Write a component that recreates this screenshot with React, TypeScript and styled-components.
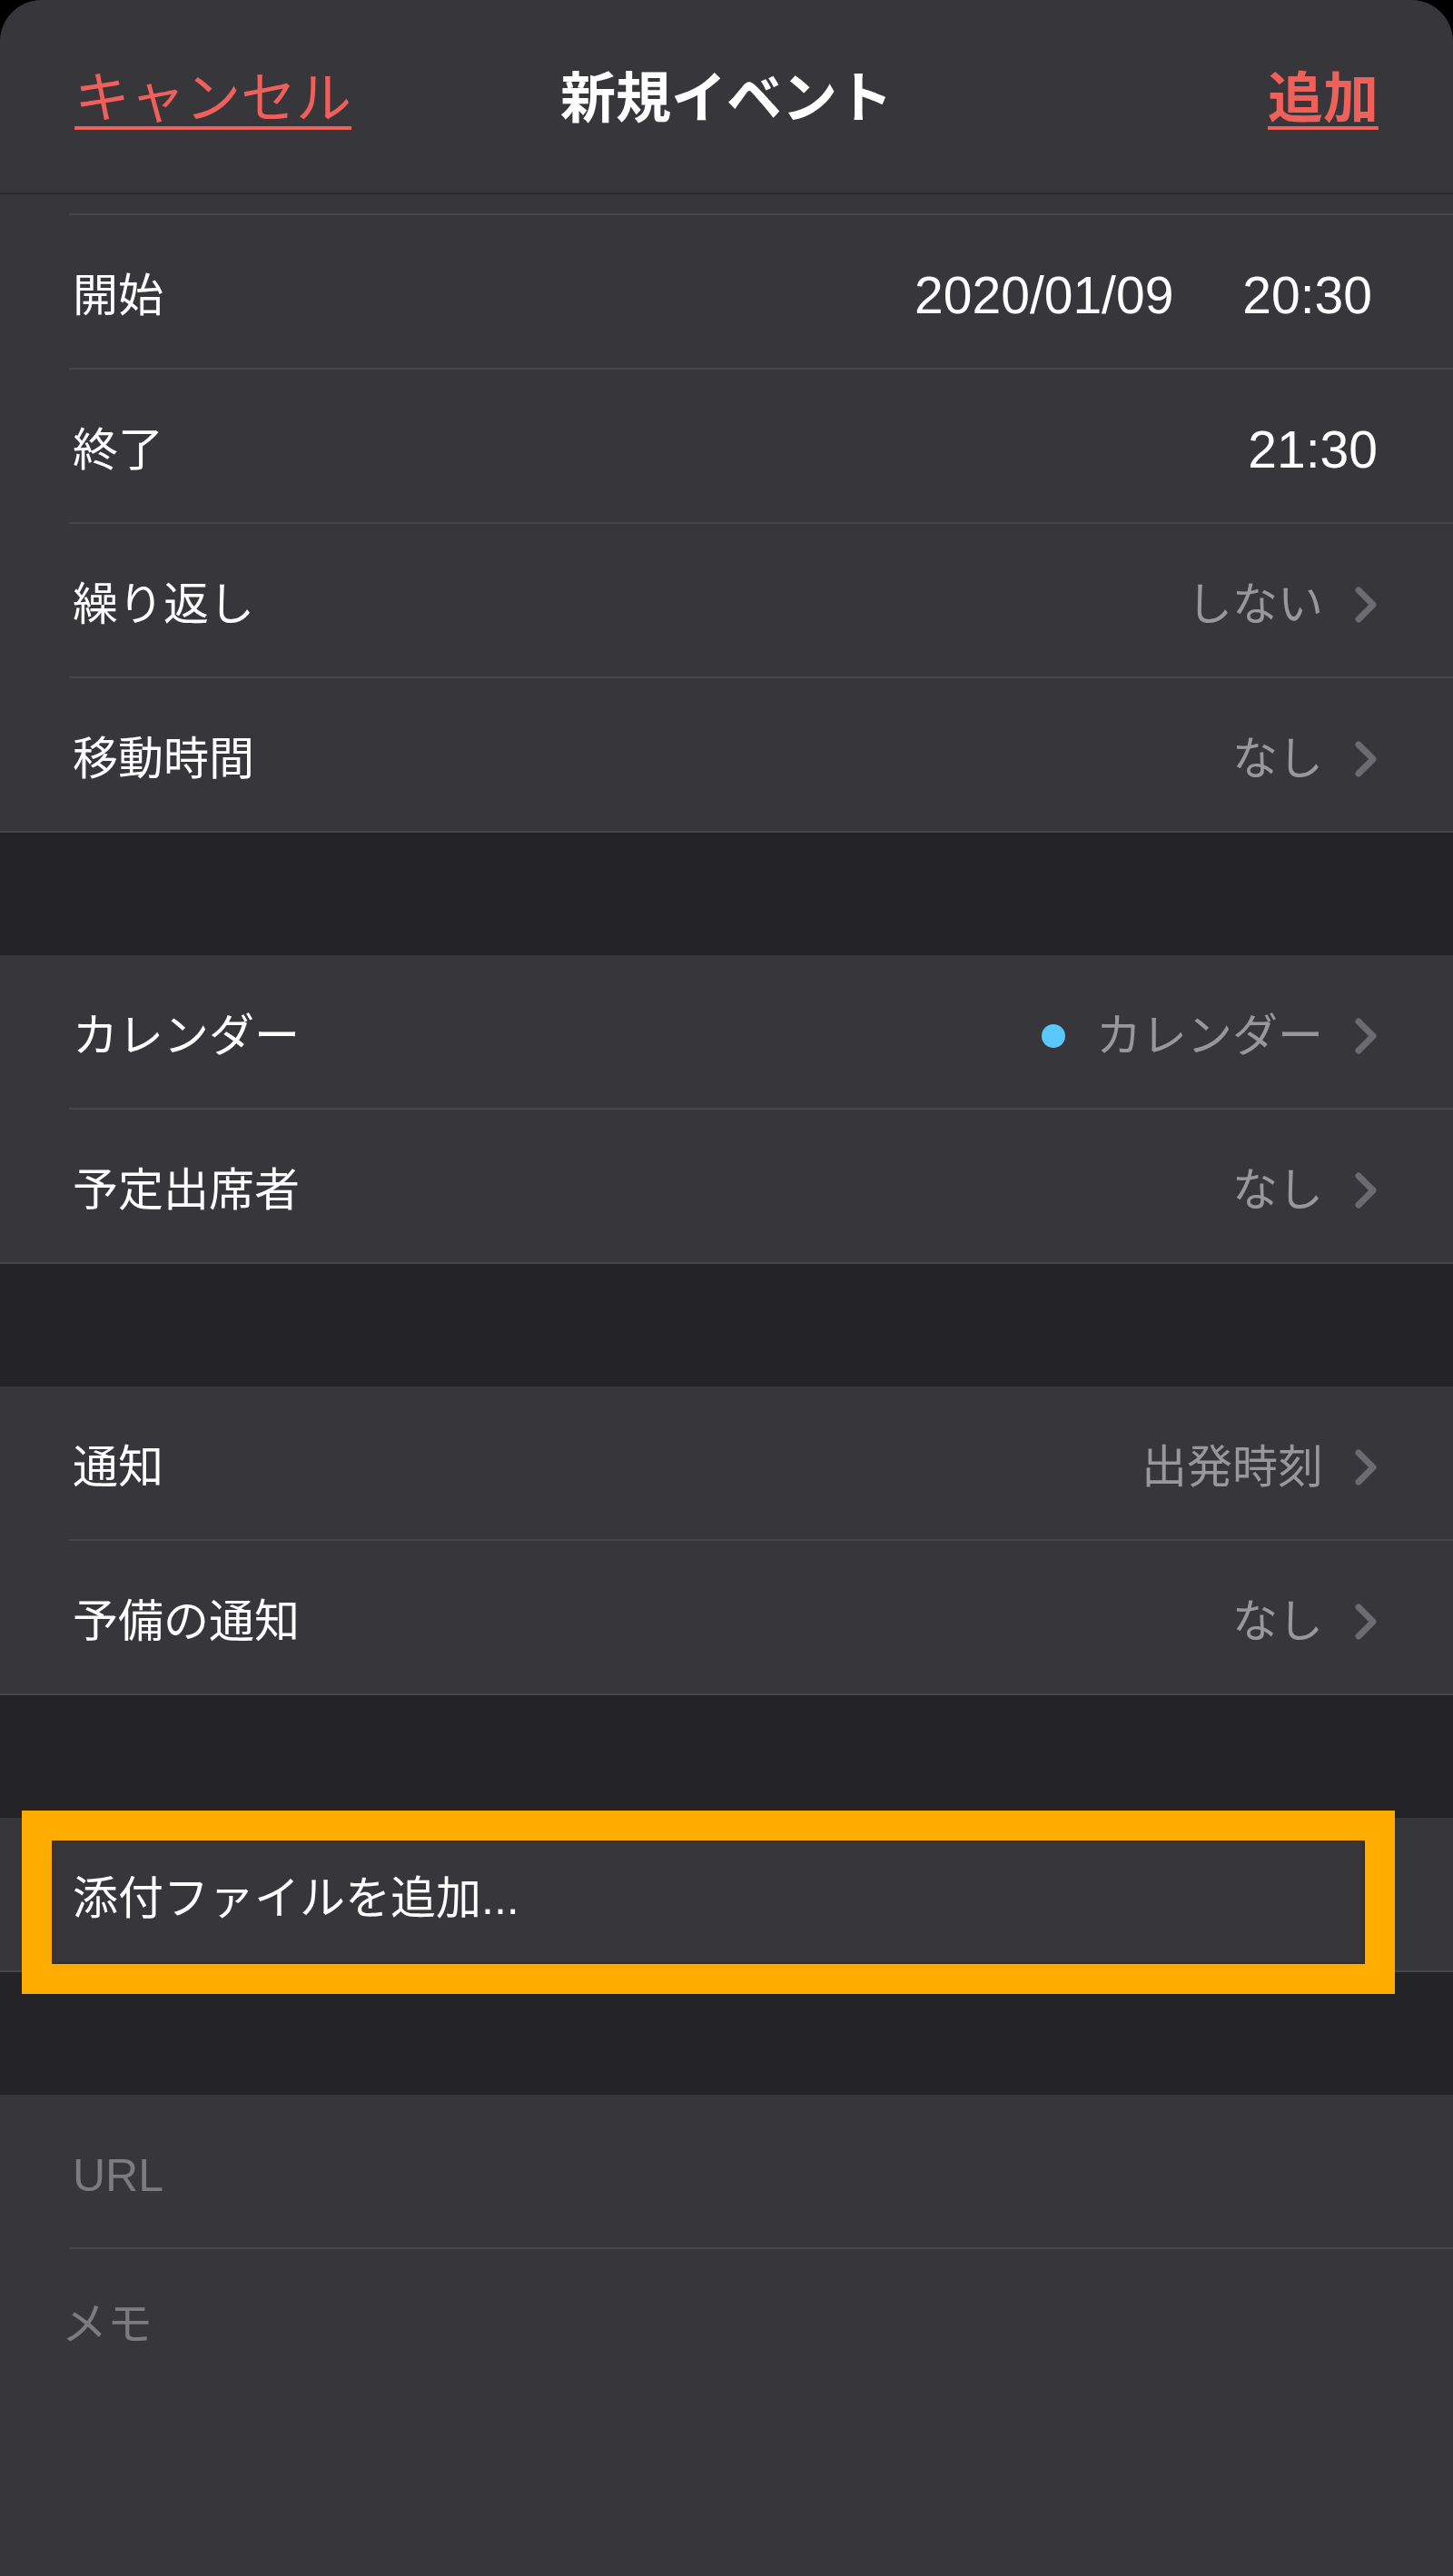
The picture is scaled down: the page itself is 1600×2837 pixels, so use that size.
import React, { FunctionComponent } from "react"
import styled, { createGlobalStyle } from "styled-components"

const GlobalStyle = createGlobalStyle`
  html, body {
    margin: 0;
    padding: 0;
    background: #000;
  }
  body {
    font-family: "Liberation Sans", "Noto Sans CJK JP", sans-serif;
    -webkit-font-smoothing: antialiased;
  }
`

const Sheet = styled.div`
  display: flex;
  flex-direction: column;
  min-height: 2837px;
  background-color: #242328;
  border-radius: 46px 46px 0 0;
  overflow: hidden;
`

const NavBar = styled.div`
  display: grid;
  grid-template-columns: 1fr auto 1fr;
  align-items: center;
  height: 214px;
  padding: 6px 82px 0;
  box-sizing: border-box;
  background-color: #37363b;
  border-bottom: 2px solid #2a292e;
`

interface NavButtonProps {
  bold?: boolean
  align?: "left" | "right"
}
const NavButton = styled.div<NavButtonProps>`
  color: #f0605b;
  font-size: 61px;
  line-height: 1;
  font-weight: ${props => (props.bold ? 700 : 400)};
  text-align: ${props => props.align || "left"};
  text-decoration: underline;
  text-decoration-thickness: 4px;
  text-underline-offset: 9px;
`

const NavTitle = styled.div`
  color: #fff;
  font-size: 61px;
  font-weight: 700;
  line-height: 1;
`

interface GroupProps {
  grow?: boolean
}
const Group = styled.div<GroupProps>`
  position: relative;
  display: flex;
  flex-direction: column;
  background-color: #37363b;
  border-bottom: ${props => (props.grow ? "none" : "2px solid #47464b")};
  flex: ${props => (props.grow ? 1 : "none")};
`

const TopStrip = styled.div`
  height: 21px;
`

const Gap = styled.div`
  height: 135px;
  background-color: #242328;
`

const Separator = styled.div`
  height: 2px;
  margin-left: 76px;
  background-color: #48474d;
`

const Row = styled.div`
  display: flex;
  align-items: center;
  justify-content: space-between;
  height: 168px;
  padding: 9px 83px 0 80px;
  box-sizing: border-box;
`

interface LabelProps {
  muted?: boolean
}
const Label = styled.div<LabelProps>`
  color: ${props => (props.muted ? "#7c7b80" : "#ffffff")};
  font-size: 50px;
  line-height: 1;
`

const Detail = styled.div`
  display: flex;
  align-items: center;
`

const DetailText = styled.div`
  color: #98979c;
  font-size: 50px;
  line-height: 1;
`

const DateTime = styled.div`
  display: flex;
  align-items: center;
  gap: 76px;
`

interface StampProps {
  trailing?: number
}
const Stamp = styled.div<StampProps>`
  color: #ffffff;
  font-size: 57px;
  line-height: 1;
  margin-right: ${props => props.trailing || 0}px;
`

const Dot = styled.span`
  width: 26px;
  height: 26px;
  border-radius: 50%;
  background-color: #5ac8fa;
  margin-right: 34px;
`

const ChevronBox = styled.span`
  display: flex;
  margin-left: 34px;
`

const MemoArea = styled.div`
  flex: 1;
  padding: 52px 0 0 68px;
  color: #7c7b80;
  font-size: 50px;
  line-height: 62px;
`

const Highlight = styled.div`
  position: absolute;
  top: -8px;
  left: 24px;
  width: 1512px;
  height: 202px;
  box-sizing: border-box;
  border: 33px solid #fead00;
  box-shadow: inset 0 0 0 2px rgba(60, 40, 0, 0.6);
  pointer-events: none;
`

const Chevron: FunctionComponent = () => (
  <ChevronBox>
    <svg width="26" height="42" viewBox="0 0 26 42">
      <polyline
        points="5,5 21,21 5,37"
        fill="none"
        stroke="#6c6b71"
        strokeWidth="7"
        strokeLinecap="round"
        strokeLinejoin="round"
      />
    </svg>
  </ChevronBox>
)

interface DisclosureRowProps {
  label: string
  value: string
  dot?: boolean
}
const DisclosureRow: FunctionComponent<DisclosureRowProps> = ({ label, value, dot }) => (
  <Row>
    <Label>{label}</Label>
    <Detail>
      {dot && <Dot />}
      <DetailText>{value}</DetailText>
      <Chevron />
    </Detail>
  </Row>
)

const App: FunctionComponent = () => {
  return (
    <>
      <GlobalStyle />
      <Sheet>
        <NavBar>
          <NavButton>キャンセル</NavButton>
          <NavTitle>新規イベント</NavTitle>
          <NavButton bold align="right">
            追加
          </NavButton>
        </NavBar>

        <Group>
          <TopStrip />
          <Separator />
          <Row>
            <Label>開始</Label>
            <DateTime>
              <Stamp>2020/01/09</Stamp>
              <Stamp trailing={6}>20:30</Stamp>
            </DateTime>
          </Row>
          <Separator />
          <Row>
            <Label>終了</Label>
            <Stamp>21:30</Stamp>
          </Row>
          <Separator />
          <DisclosureRow label="繰り返し" value="しない" />
          <Separator />
          <DisclosureRow label="移動時間" value="なし" />
        </Group>

        <Gap />

        <Group>
          <DisclosureRow label="カレンダー" value="カレンダー" dot />
          <Separator />
          <DisclosureRow label="予定出席者" value="なし" />
        </Group>

        <Gap />

        <Group>
          <DisclosureRow label="通知" value="出発時刻" />
          <Separator />
          <DisclosureRow label="予備の通知" value="なし" />
        </Group>

        <Gap />

        <Group>
          <Row>
            <Label>添付ファイルを追加...</Label>
          </Row>
          <Highlight />
        </Group>

        <Gap />

        <Group grow>
          <Row>
            <Label muted>URL</Label>
          </Row>
          <Separator />
          <MemoArea>メモ</MemoArea>
        </Group>
      </Sheet>
    </>
  )
}

export default App
